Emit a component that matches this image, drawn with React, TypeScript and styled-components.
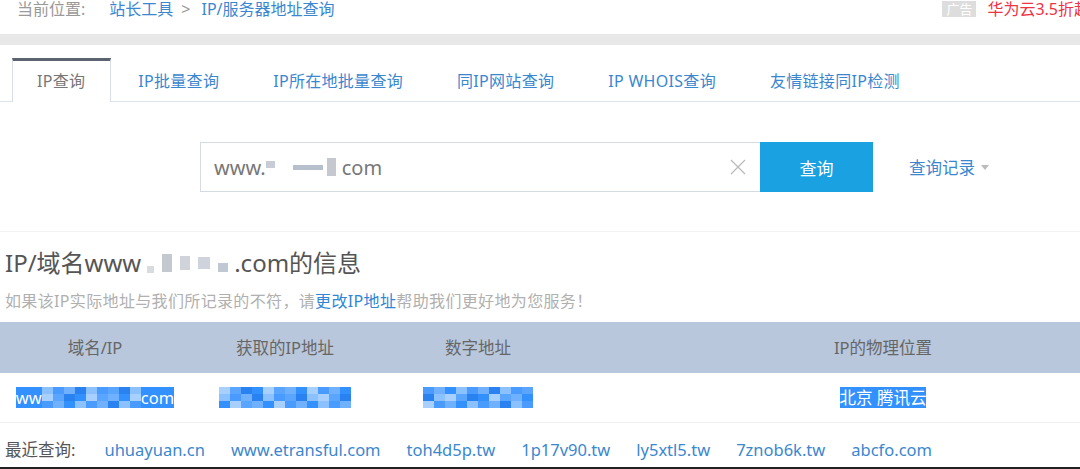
import styled, { createGlobalStyle } from "styled-components";

const GlobalStyle = createGlobalStyle`
    html, body {
        margin: 0;
        padding: 0;
        background: #fff;
        width: 1080px;
        height: 469px;
        overflow: hidden;
    }
    body {
        font-family: "Noto Sans", "Noto Sans CJK SC", sans-serif;
    }
`

const Page = styled.div`
    width: 1080px;
    height: 469px;
    display: flex;
    flex-direction: column;
    overflow: hidden;
    border-bottom: 2px solid #222;
    box-sizing: border-box;
`

const TopBar = styled.div`
    display: flex;
    align-items: center;
    height: 18px;
    padding-left: 17px;
    font-size: 16px;
    line-height: 18px;
`

const Crumb = styled.span<{ $link?: boolean }>`
    color: ${({ $link }) => ($link ? "#3b87cf" : "#999")};
`

const Sep = styled.span`
    color: #999;
    margin: 0 11px 0 8px;
`

const Ad = styled.div`
    margin-left: auto;
    margin-right: -10px;
    display: flex;
    align-items: center;
    gap: 11px;
    white-space: nowrap;
`

const AdTag = styled.span`
    background: #ddd;
    color: #fff;
    font-size: 13px;
    line-height: 16px;
    padding: 0 4px;
`

const AdText = styled.span`
    color: #ee3344;
    font-size: 16px;
`

const Band = styled.div`
    height: 11px;
    background: #e8e8e8;
    margin-top: 16px;
`

const Tabs = styled.div`
    display: flex;
    margin-top: 13px;
    padding-left: 12px;
    border-bottom: 1px solid #dce3ea;
    height: 43px;
`

const Tab = styled.div`
    display: flex;
    align-items: center;
    padding: 0 27px 3px 27px;
    font-size: 16px;
    letter-spacing: 0.3px;
    color: #3b87cf;
    background: #fff;
    box-sizing: border-box;
    height: 43px;
    border-top: 3px solid transparent;
    white-space: nowrap;

    &.active {
        color: #777;
        height: 44px;
        padding: 0 25px 3px 24px;
        border-top-color: #5c6370;
        border-left: 1px solid #d8dee6;
        border-right: 1px solid #d8dee6;
    }
`

const SearchRow = styled.div`
    display: flex;
    align-items: center;
    margin-top: 40px;
    padding-left: 200px;
    height: 50px;
`

const InputBox = styled.div`
    width: 560px;
    height: 50px;
    box-sizing: border-box;
    border: 1px solid #d6dbe2;
    border-right: none;
    display: flex;
    align-items: center;
    padding: 0 14px 0 13px;
    font-size: 20px;
    color: #777;
`

const Mosaic = styled.span<{ $w: number; $h: number; $c: string }>`
    display: inline-block;
    width: ${({ $w }) => $w}px;
    height: ${({ $h }) => $h}px;
    background: ${({ $c }) => $c};
    vertical-align: middle;
    flex-shrink: 0;
`

const Clear = styled.span`
    margin-left: auto;
    display: flex;
    align-items: center;
`

const Button = styled.div`
    width: 113px;
    height: 50px;
    background: #1aa1e1;
    color: #fff;
    font-size: 17px;
    display: flex;
    align-items: center;
    justify-content: center;
`

const History = styled.div`
    margin-left: 36px;
    color: #3b87cf;
    font-size: 16.5px;
    display: flex;
    align-items: center;
    gap: 6px;
`

const Divider = styled.div`
    height: 1px;
    background: #f2f2f2;
    margin-top: 39px;
`

const Heading = styled.div`
    margin-top: 14px;
    padding-left: 5px;
    font-size: 24px;
    line-height: 34px;
    color: #555;
    display: flex;
    align-items: center;
`

const Note = styled.div`
    margin-top: 11px;
    padding-left: 5px;
    font-size: 16px;
    letter-spacing: 0.35px;
    line-height: 20px;
    color: #b0b0b0;
    white-space: nowrap;
`

const NoteLink = styled.span`
    color: #2f86d6;
`

const Table = styled.div`
    margin-top: 11px;
    width: 1190px;
`

const Row = styled.div<{ $head?: boolean }>`
    display: grid;
    grid-template-columns: 190px 190px 196px 614px;
    height: ${({ $head }) => ($head ? "50px" : "49px")};
    align-items: center;
    background: ${({ $head }) => ($head ? "#b9c7dc" : "#fff")};
    border-bottom: 1px solid ${({ $head }) => ($head ? "#b9c7dc" : "#eef0f3")};
    font-size: 16.5px;
    color: #666;
`

const Cell = styled.div`
    display: flex;
    justify-content: center;
    align-items: center;
`

const Selected = styled.span`
    background: #3390ff;
    color: #fff;
    font-size: 16.5px;
    line-height: 21px;
    display: inline-flex;
    align-items: center;
`

const Recent = styled.div`
    display: flex;
    align-items: center;
    padding-left: 5px;
    margin-top: 14px;
    font-size: 16.5px;
    gap: 26px;
    white-space: nowrap;
`

const RecentLabel = styled.span`
    color: #555;
    margin-right: 3px;
`

const RecentLink = styled.span`
    color: #3b87cf;
`

const blueShades = ["#3390ff", "#6fb0ff", "#4a9bff", "#8cc1ff", "#2a82f0", "#5aa5ff", "#a8d0ff"];

const BlueBlocks = ({ cols, seed }: { cols: number; seed: number }) => (
    <span style={{ display: "inline-grid", gridTemplateColumns: `repeat(${cols}, 11px)`, gridTemplateRows: "repeat(3, 7px)" }}>
        {Array.from({ length: cols * 3 }).map((_, i) => (
            <span key={i} style={{ background: blueShades[(i * 5 + seed * 3 + (i % 3)) % blueShades.length] }} />
        ))}
    </span>
);

const recent = ["uhuayuan.cn", "www.etransful.com", "toh4d5p.tw", "1p17v90.tw", "ly5xtl5.tw", "7znob6k.tw", "abcfo.com"];

const tabs = ["IP查询", "IP批量查询", "IP所在地批量查询", "同IP网站查询", "IP WHOIS查询", "友情链接同IP检测"];

const App = () => {
    return (
        <>
            <GlobalStyle />
            <Page>
                <TopBar>
                    <Crumb>当前位置:</Crumb>
                    <span style={{ width: 24 }} />
                    <Crumb $link>站长工具</Crumb>
                    <Sep>&gt;</Sep>
                    <Crumb $link>IP/服务器地址查询</Crumb>
                    <Ad>
                        <AdTag>广告</AdTag>
                        <AdText>华为云3.5折起</AdText>
                    </Ad>
                </TopBar>
                <Band />
                <Tabs>
                    {tabs.map((t, i) => (
                        <Tab key={t} className={i === 0 ? "active" : undefined}>{t}</Tab>
                    ))}
                </Tabs>
                <SearchRow>
                    <InputBox>
                        www.
                        <span style={{ display: "inline-flex", alignItems: "center", gap: 4, width: 76 }}>
                            <Mosaic $w={9} $h={7} $c="#c8ccd6" style={{ marginTop: -6 }} />
                            <Mosaic $w={10} $h={3} $c="#fff" />
                            <Mosaic $w={30} $h={5} $c="#b8bfcc" />
                            <Mosaic $w={9} $h={18} $c="#c5c8cf" />
                        </span>
                        com
                        <Clear>
                            <svg width="16" height="16" viewBox="0 0 16 16">
                                <path d="M1 1 L15 15 M15 1 L1 15" stroke="#bbb" strokeWidth="1.3" />
                            </svg>
                        </Clear>
                    </InputBox>
                    <Button>查询</Button>
                    <History>
                        查询记录
                        <svg width="8" height="5" viewBox="0 0 8 5">
                            <path d="M0 0 L8 0 L4 5 Z" fill="#bbb" />
                        </svg>
                    </History>
                </SearchRow>
                <Divider />
                <Heading>
                    IP/域名www
                    <span style={{ display: "inline-flex", alignItems: "center", gap: 8, width: 93, paddingLeft: 6, boxSizing: "border-box" }}>
                        <Mosaic $w={7} $h={7} $c="#d8dbe0" style={{ marginTop: 12 }} />
                        <Mosaic $w={10} $h={18} $c="#c4c8cf" />
                        <Mosaic $w={10} $h={14} $c="#d0d3da" />
                        <Mosaic $w={12} $h={12} $c="#cfd3db" />
                        <Mosaic $w={10} $h={9} $c="#c0c8d4" style={{ marginTop: 8 }} />
                    </span>
                    .com的信息
                </Heading>
                <Note>
                    如果该IP实际地址与我们所记录的不符，请<NoteLink>更改IP地址</NoteLink>帮助我们更好地为您服务！
                </Note>
                <Table>
                    <Row $head>
                        <Cell>域名/IP</Cell>
                        <Cell>获取的IP地址</Cell>
                        <Cell>数字地址</Cell>
                        <Cell>IP的物理位置</Cell>
                    </Row>
                    <Row>
                        <Cell>
                            <Selected>
                                ww
                                <BlueBlocks cols={9} seed={1} />
                                com
                            </Selected>
                        </Cell>
                        <Cell>
                            <BlueBlocks cols={12} seed={2} />
                        </Cell>
                        <Cell>
                            <BlueBlocks cols={10} seed={3} />
                        </Cell>
                        <Cell>
                            <Selected>北京 腾讯云</Selected>
                        </Cell>
                    </Row>
                </Table>
                <Recent>
                    <RecentLabel>最近查询:</RecentLabel>
                    {recent.map((r) => (
                        <RecentLink key={r}>{r}</RecentLink>
                    ))}
                </Recent>
            </Page>
        </>
    );
};

export default App;
